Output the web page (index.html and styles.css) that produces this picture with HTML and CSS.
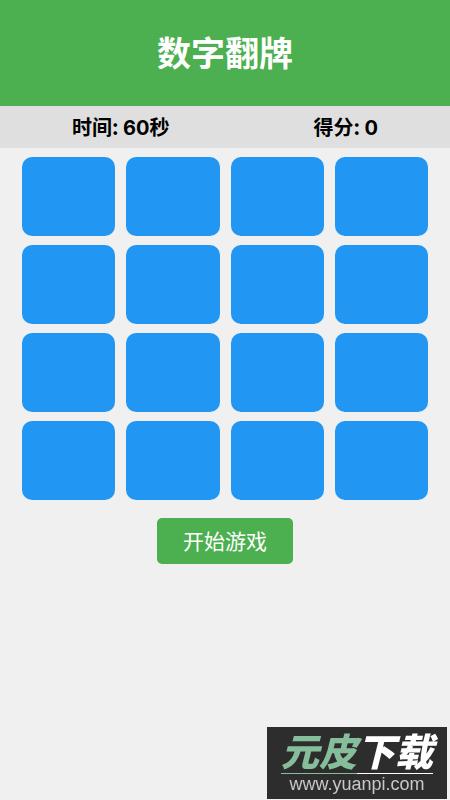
FILE: index.html
```html
<!DOCTYPE html>
<html lang="zh-CN">
<head>
<meta charset="utf-8">
<meta name="viewport" content="width=device-width, initial-scale=1">
<title>数字翻牌</title>
<link rel="stylesheet" href="styles.css">
</head>
<body>
<header class="header"><h1 class="title">数字翻牌</h1></header>
<div class="stats">
  <div class="stat">时间: <span class="num">60</span>秒</div>
  <div class="stat">得分: <span class="num">0</span></div>
</div>
<main class="game">
  <div class="board">
    <button class="card" type="button" aria-label="1"></button>
    <button class="card" type="button" aria-label="2"></button>
    <button class="card" type="button" aria-label="3"></button>
    <button class="card" type="button" aria-label="4"></button>
    <button class="card" type="button" aria-label="5"></button>
    <button class="card" type="button" aria-label="6"></button>
    <button class="card" type="button" aria-label="7"></button>
    <button class="card" type="button" aria-label="8"></button>
    <button class="card" type="button" aria-label="9"></button>
    <button class="card" type="button" aria-label="10"></button>
    <button class="card" type="button" aria-label="11"></button>
    <button class="card" type="button" aria-label="12"></button>
    <button class="card" type="button" aria-label="13"></button>
    <button class="card" type="button" aria-label="14"></button>
    <button class="card" type="button" aria-label="15"></button>
    <button class="card" type="button" aria-label="16"></button>
  </div>
  <button class="start" type="button">开始游戏</button>
</main>
<aside class="mark">
  <div class="mark-name"><span class="mark-green">元皮</span>下载</div>
  <div class="mark-line"></div>
  <div class="mark-url">www.yuanpi.com</div>
</aside>
</body>
</html>
```

FILE: styles.css
```css
* {
  box-sizing: border-box;
}

body {
  margin: 0;
  min-height: 100vh;
  background: #f0f0f0;
  color: #000;
  font-family: "Noto Sans CJK SC", sans-serif;
}

.header {
  padding: 32px 16px 34px;
  background: #4caf50;
  color: #fff;
  text-align: center;
}

.title {
  margin: 0;
  font-size: 34px;
  line-height: 40px;
  font-weight: 700;
}

.stats {
  display: flex;
  justify-content: space-between;
  padding: 9px 16%;
  background: #dfdfdf;
  font-size: 20px;
  line-height: 24px;
  font-weight: 700;
}

.num {
  font-family: Inter, sans-serif;
  line-height: 1;
}

.game {
  display: flex;
  flex-direction: column;
  align-items: center;
  gap: 18px;
  padding: 9px 22px;
}

.board {
  display: grid;
  grid-template-columns: repeat(4, 1fr);
  gap: 9px 11px;
  width: 100%;
}

.card {
  height: 79px;
  padding: 0;
  border: 0;
  border-radius: 10px;
  background: #2196f3;
}

.start {
  padding: 10px 26px 12px;
  border: 0;
  border-radius: 5px;
  background: #4caf50;
  color: #fff;
  font-family: inherit;
  font-size: 21px;
  line-height: 24px;
}

.mark {
  position: fixed;
  right: 3px;
  bottom: 1px;
  padding: 0 14px 5px;
  background: #2d2d2d;
  color: #fff;
  text-align: center;
}

.mark-name {
  font-size: 38px;
  line-height: 46px;
  font-weight: 900;
  font-style: italic;
}

.mark-green {
  color: #86bd9a;
}

.mark-line {
  height: 1px;
  background: linear-gradient(to right, #86bd9a 50%, #fff 50%);
}

.mark-url {
  color: #c8c8c8;
  font-family: "Liberation Sans", sans-serif;
  font-size: 18px;
  line-height: 20px;
}
```
